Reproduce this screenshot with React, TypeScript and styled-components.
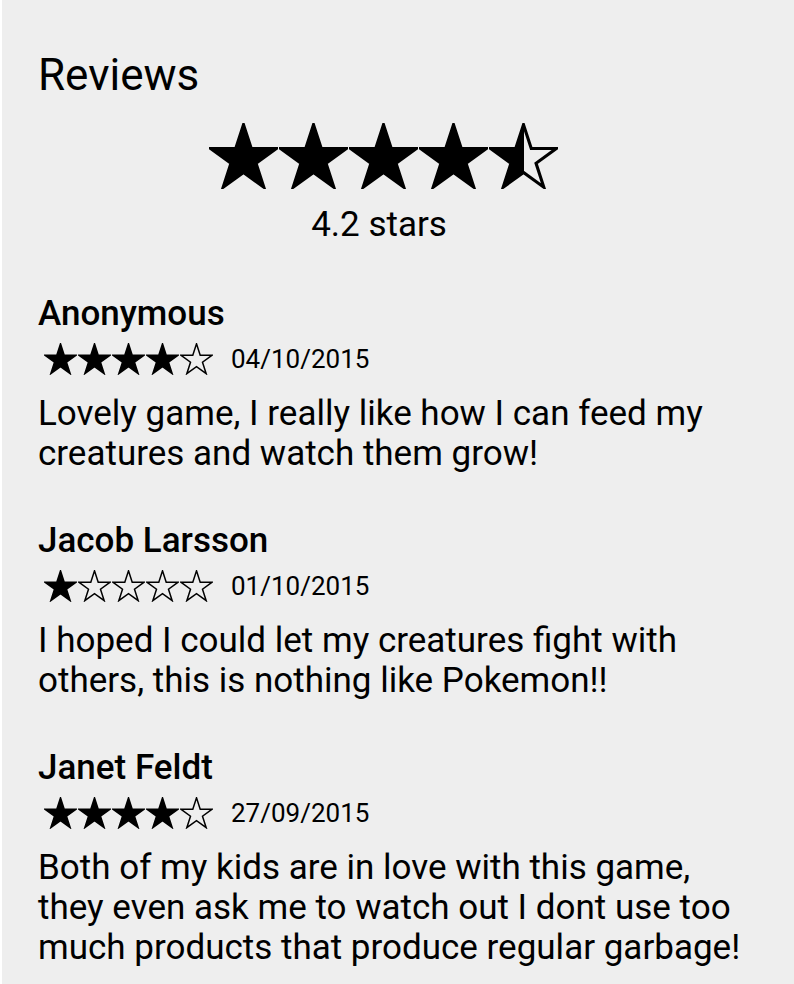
import React, { useId } from 'react';
import styled, { createGlobalStyle } from 'styled-components';

interface ReviewType {
  id: number;
  author: string;
  rating: number;
  date: string;
  text: string;
}

const reviews: ReviewType[] = [
  {
    id: 1,
    author: 'Anonymous',
    rating: 4,
    date: '04/10/2015',
    text: 'Lovely game, I really like how I can feed my creatures and watch them grow!',
  },
  {
    id: 2,
    author: 'Jacob Larsson',
    rating: 1,
    date: '01/10/2015',
    text: 'I hoped I could let my creatures fight with others, this is nothing like Pokemon!!',
  },
  {
    id: 3,
    author: 'Janet Feldt',
    rating: 4,
    date: '27/09/2015',
    text: 'Both of my kids are in love with this game, they even ask me to watch out I dont use too much products that produce regular garbage!',
  },
];

const STAR_PATH =
  'M50 0 L61.23 34.55 L97.55 34.55 L68.17 55.9 L79.39 90.45 L50 69.1 L20.61 90.45 L31.83 55.9 L2.45 34.55 L38.77 34.55 Z';

const GlobalStyle = createGlobalStyle`
  html, body {
    margin: 0;
    padding: 0;
    background: #ffffff;
  }
  body {
    font-family: Roboto, "Noto Sans", sans-serif;
    color: #000;
  }
`;

const Page = styled.div`
  box-sizing: border-box;
  margin-left: 2px;
  min-height: 984px;
  background-color: #eeeeee;
  padding: 49px 36px 0 36px;
`;

const Title = styled.h1`
  margin: 0;
  font-size: 44px;
  font-weight: 400;
  line-height: 52px;
`;

const Summary = styled.div`
  width: 690px;
  display: flex;
  flex-direction: column;
  align-items: center;
  margin-top: 22px;
`;

const StarRow = styled.div<{ $gap: number }>`
  display: flex;
  align-items: center;
  gap: ${(p) => p.$gap}px;
`;

const StarSvg = styled.svg<{ $size: number }>`
  display: block;
  flex: none;
  width: ${(p) => p.$size}px;
  height: ${(p) => p.$size * 0.955}px;
`;

const AverageText = styled.div`
  font-size: 35px;
  line-height: 40px;
  margin-top: 16px;
  padding-right: 8px;
`;

const ReviewList = styled.div`
  display: flex;
  flex-direction: column;
  gap: 47px;
  margin-top: 49px;
`;

const ReviewItem = styled.div`
  display: flex;
  flex-direction: column;
`;

const Author = styled.div`
  font-size: 35px;
  font-weight: 500;
  line-height: 40px;
`;

const Meta = styled.div`
  display: flex;
  align-items: center;
  gap: 18px;
  margin-left: 6px;
  margin-top: 9px;
`;

const DateText = styled.span`
  font-size: 26px;
  line-height: 32px;
`;

const Body = styled.p`
  margin: 19px 0 0 0;
  font-size: 35px;
  line-height: 40px;
`;

const Star: React.FC<{ fill: number; size: number }> = ({ fill, size }) => {
  const gradId = useId().replace(/:/g, '');
  const paint = fill >= 1 ? '#000' : fill <= 0 ? 'none' : `url(#${gradId})`;
  return (
    <StarSvg $size={size} viewBox="0 -2.5 100 95.5">
      {fill > 0 && fill < 1 && (
        <defs>
          <linearGradient id={gradId} x1="0" x2="1" y1="0" y2="0">
            <stop offset={fill} stopColor="#000" />
            <stop offset={fill} stopColor="#000" stopOpacity="0" />
          </linearGradient>
        </defs>
      )}
      <path
        d={STAR_PATH}
        fill={paint}
        stroke="#000"
        strokeWidth={4.5}
        strokeLinejoin="miter"
      />
    </StarSvg>
  );
};

const Stars: React.FC<{ rating: number; size: number; gap: number }> = ({
  rating,
  size,
  gap,
}) => {
  return (
    <StarRow $gap={gap}>
      {[0, 1, 2, 3, 4].map((i) => {
        const f = Math.max(0, Math.min(1, rating - i));
        // partly filled stars show as a half star
        const shown = f >= 0.75 ? 1 : f > 0.1 ? 0.5 : 0;
        return <Star key={`star-${i}`} fill={shown} size={size} />;
      })}
    </StarRow>
  );
};

const App: React.FC = () => {
  return (
    <>
      <GlobalStyle />
      <Page>
        <Title>Reviews</Title>
        <Summary>
          <Stars rating={4.4} size={69} gap={1} />
          <AverageText>4.2 stars</AverageText>
        </Summary>
        <ReviewList>
          {reviews.map((review) => (
            <ReviewItem key={`review-${review.id}`}>
              <Author>{review.author}</Author>
              <Meta>
                <Stars rating={review.rating} size={33} gap={1} />
                <DateText>{review.date}</DateText>
              </Meta>
              <Body>{review.text}</Body>
            </ReviewItem>
          ))}
        </ReviewList>
      </Page>
    </>
  );
};

export default App;
